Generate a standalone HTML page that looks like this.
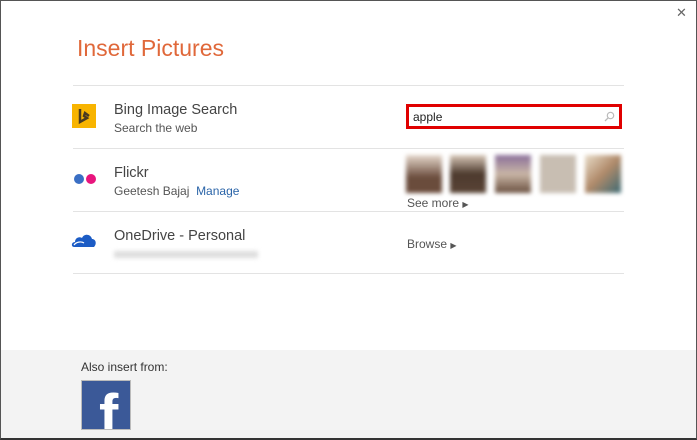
<!DOCTYPE html>
<html><head><meta charset="utf-8"><style>
*{margin:0;padding:0;box-sizing:border-box}
body{width:697px;height:440px;overflow:hidden;background:#fff;font-family:"Segoe UI","Liberation Sans",sans-serif;position:relative}
.frame{position:absolute;left:0;top:0;width:697px;height:440px;border:1px solid #555;border-bottom:2px solid #333}
.a{position:absolute}
.line{position:absolute;left:73px;width:551px;height:1px;background:#e3e3e3}
.t1{font-size:14.5px;color:#444}
.t2{font-size:12px;color:#555}
.th{position:absolute;top:155px;width:36px;height:38px;filter:blur(2px)}
</style></head><body>
<div class="frame"></div>
<div class="a" style="left:676px;top:5px;font-size:13px;color:#666">✕</div>
<div class="a" style="left:77px;top:35px;font-size:23px;color:#e0683a">Insert Pictures</div>
<div class="line" style="top:85px"></div>
<div class="line" style="top:148px"></div>
<div class="line" style="top:211px"></div>
<div class="line" style="top:273px"></div>

<div class="a" style="left:72px;top:104px;width:24px;height:24px;background:#f8b400"></div>
<svg class="a" style="left:72px;top:104px" width="24" height="24"><path d="M8 5v13l7-4-3-2 1-3 4 3" fill="none" stroke="#4a3a20" stroke-width="2.5"/></svg>
<div class="a t1" style="left:114px;top:102px">Bing Image Search</div>
<div class="a t2" style="left:114px;top:121px">Search the web</div>
<div class="a" style="left:406px;top:104px;width:216px;height:25px;border:3px solid #e00000;background:#fff"></div>
<div class="a" style="left:413px;top:110px;font-size:12px;color:#222">apple</div>
<svg class="a" style="left:604px;top:111px" width="11" height="11"><circle cx="6.5" cy="4.5" r="3.2" fill="none" stroke="#bbb" stroke-width="1.2"/><path d="M4.3 6.7 1 10" stroke="#bbb" stroke-width="1.3"/></svg>

<div class="a" style="left:74px;top:174px;width:10px;height:10px;border-radius:50%;background:#3a6fc4"></div>
<div class="a" style="left:86px;top:174px;width:10px;height:10px;border-radius:50%;background:#e8157d"></div>
<div class="a t1" style="left:114px;top:165px">Flickr</div>
<div class="a t2" style="left:114px;top:184px">Geetesh Bajaj&nbsp; <span style="color:#2a64a8">Manage</span></div>
<div class="th" style="left:406px;background:linear-gradient(#e6d8cc,#6a4c3c 60%,#6b4c3c)"></div>
<div class="th" style="left:450px;background:linear-gradient(#d8c8b8,#4d3a2e 50%,#5a4436)"></div>
<div class="th" style="left:495px;background:linear-gradient(#8a6f9a,#c9b6a6 50%,#6a5040)"></div>
<div class="th" style="left:540px;background:#c8beb2"></div>
<div class="th" style="left:585px;background:linear-gradient(135deg,#e8dcc8,#b08a6a 50%,#3c6a74)"></div>
<div class="a t2" style="left:407px;top:196px">See more <span style="font-size:8px">▶</span></div>

<svg class="a" style="left:71px;top:232px" width="26" height="16"><path d="M3 15c-3 0-3-5 1-5 0-4 4-6 7-4 2-5 9-4 10 1 4 0 5 5 2 8z" fill="#1c5cc5"/><path d="M3 13c2-3 7-4 10-2" stroke="#fff" stroke-width="1.2" fill="none"/></svg>
<div class="a t1" style="left:114px;top:228px">OneDrive - Personal</div>
<div class="a" style="left:114px;top:251px;width:144px;height:7px;background:#ddd;filter:blur(2px)"></div>
<div class="a t2" style="left:407px;top:237px">Browse <span style="font-size:8px">▶</span></div>

<div class="a" style="left:1px;top:350px;width:695px;height:88px;background:#f3f3f3"></div>
<div class="a" style="left:81px;top:360px;font-size:12px;color:#333">Also insert from:</div>
<div class="a" style="left:81px;top:380px;width:50px;height:50px;background:#3b5998;border:1px solid #bbb;overflow:hidden">
<div style="position:absolute;left:17px;top:6px;font-family:'Liberation Sans',sans-serif;font-weight:bold;font-size:58px;color:#fff;line-height:58px">f</div></div>
</body></html>
